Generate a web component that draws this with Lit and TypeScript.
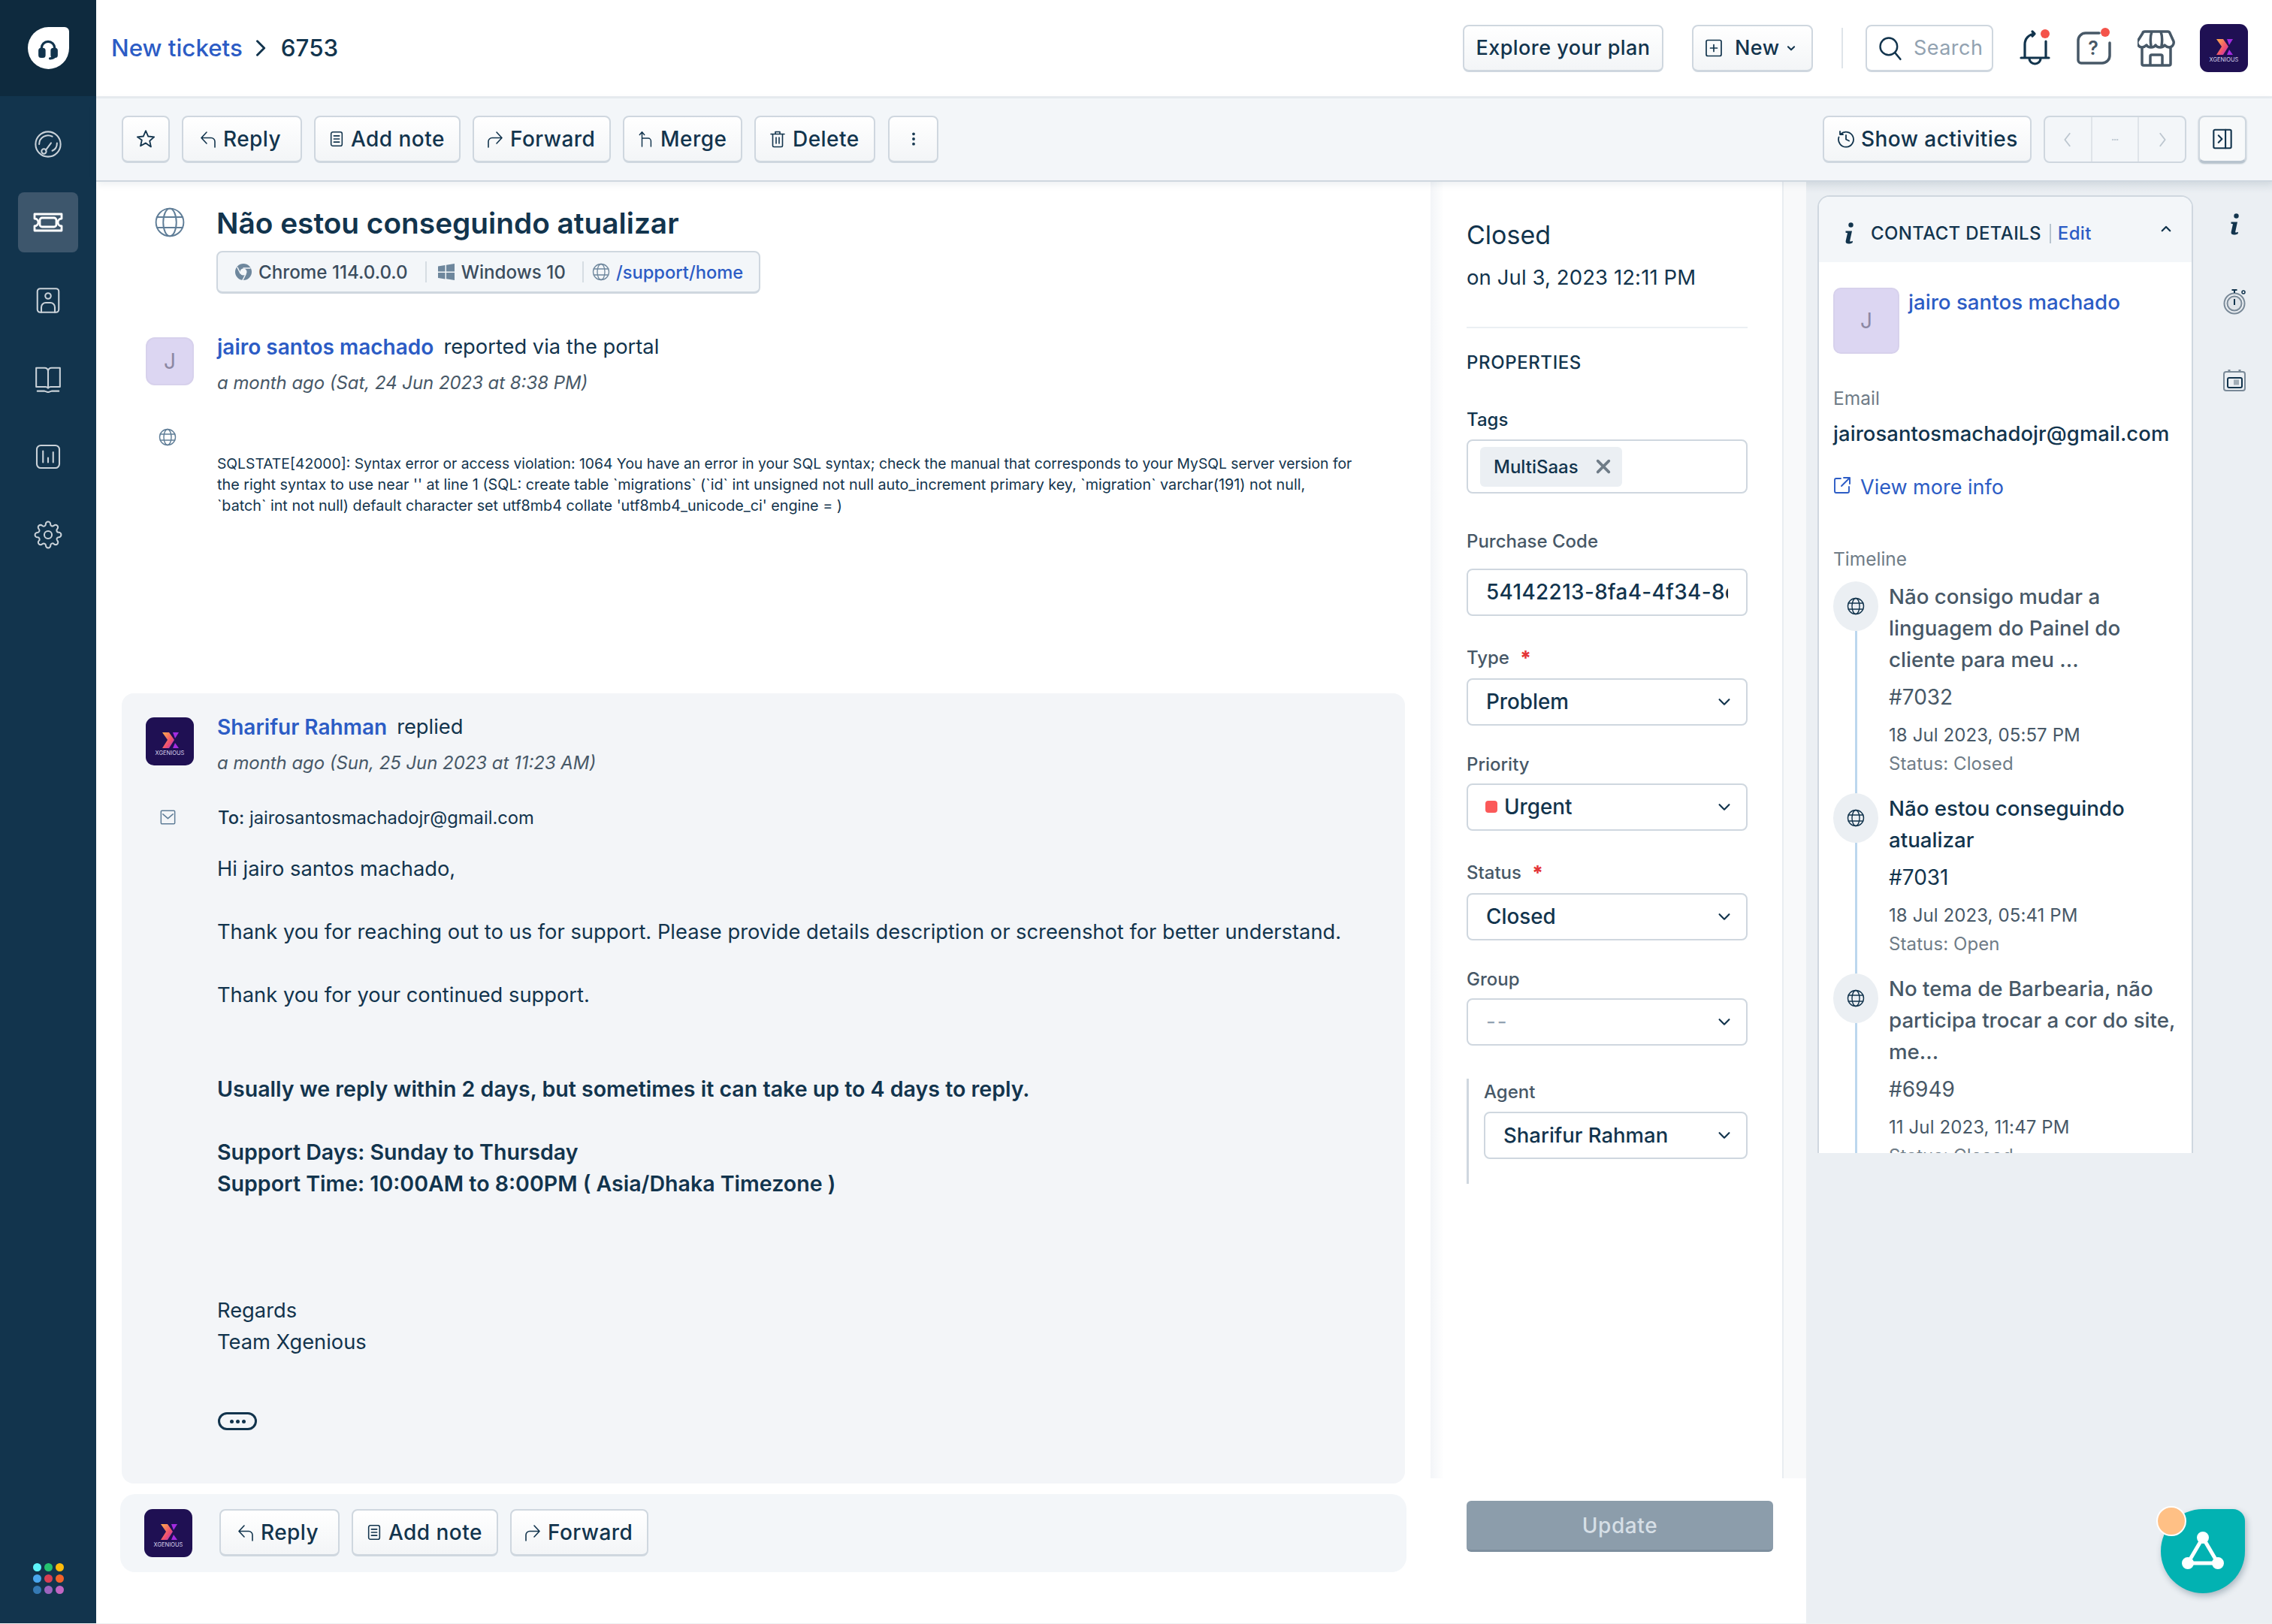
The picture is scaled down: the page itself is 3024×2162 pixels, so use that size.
import { LitElement, html, css, svg } from "lit";
import { customElement } from "lit/decorators.js";

const ic = (w: number, h: number, body: unknown, sw = 2, vb = "0 0 24 24") =>
  html`<svg width=${w} height=${h} viewBox=${vb} fill="none" stroke="currentColor" stroke-width=${sw} stroke-linecap="round" stroke-linejoin="round">${body}</svg>`;

const replyP = svg`<path d="M10 3 3 10.500 10 18M3.500 10.500H16a5 5 0 0 1 5 5V23"/>`;
const forwardP = svg`<path d="M14 3l7 7.500L14 18M20.500 10.500H8a5 5 0 0 0-5 5V23"/>`;
const noteP = svg`<rect x="4" y="2" width="16" height="20" rx="2.500"/><path d="M8 7.500h8M8 12h8M8 16.500h8"/>`;
const mergeP = svg`<path d="M6 23V2M2.500 6 6 2l3.500 4M6 11h9a4 4 0 0 1 4 4v8"/>`;
const starP = svg`<path d="m12 2 3 6.800 7.300.7-5.500 4.900 1.600 7.200L12 17l-6.400 3.600 1.600-7.200L1.700 9.500 9 8.800z"/>`;
const trashP = svg`<path d="M3 5.500h18M9 5.500V2.500h6v3M5.500 5.500V21a1.500 1.500 0 0 0 1.500 1.500h10a1.500 1.500 0 0 0 1.500-1.500V5.500M10 10v8M14 10v8"/>`;
const globeP = svg`<circle cx="12" cy="12" r="10.500"/><ellipse cx="12" cy="12" rx="5" ry="10.500"/><path d="M2.200 8h19.600M2.200 16h19.600"/>`;
const chev = svg`<path d="m5 9 7 7 7-7"/>`;
const gearP = svg`<circle cx="12" cy="12" r="3.200"/><path d="M19.400 15a1.650 1.650 0 0 0 .33 1.820l.06.06a2 2 0 0 1 0 2.830 2 2 0 0 1-2.830 0l-.06-.06a1.650 1.650 0 0 0-1.820-.33 1.650 1.650 0 0 0-1 1.510V21a2 2 0 0 1-2 2 2 2 0 0 1-2-2v-.09A1.650 1.650 0 0 0 9 19.400a1.650 1.650 0 0 0-1.820.33l-.06.06a2 2 0 0 1-2.830 0 2 2 0 0 1 0-2.830l.06-.06a1.650 1.650 0 0 0 .33-1.820 1.650 1.650 0 0 0-1.510-1H3a2 2 0 0 1-2-2 2 2 0 0 1 2-2h.09A1.650 1.650 0 0 0 4.600 9a1.650 1.650 0 0 0-.33-1.820l-.06-.06a2 2 0 0 1 0-2.830 2 2 0 0 1 2.830 0l.06.06a1.650 1.650 0 0 0 1.820.33H9a1.650 1.650 0 0 0 1-1.510V3a2 2 0 0 1 2-2 2 2 0 0 1 2 2v.09a1.650 1.650 0 0 0 1 1.510 1.650 1.650 0 0 0 1.820-.33l.06-.06a2 2 0 0 1 2.830 0 2 2 0 0 1 0 2.830l-.06.06a1.650 1.650 0 0 0-.33 1.820V9a1.650 1.650 0 0 0 1.510 1H21a2 2 0 0 1 2 2 2 2 0 0 1-2 2h-.09a1.650 1.650 0 0 0-1.510 1z"/>`;
const infoI = html`<svg width="16" height="30" viewBox="0 0 16 30"><circle cx="10.500" cy="3.500" r="3.200" fill="currentColor"/><path d="M3.500 11.500h8.500l-2.800 13c-.2 1.300 1.500 1.200 3.800.2l-.4 2.500c-3.500 1.800-9.500 2.300-9-2.200L6 14.200 3.500 13.800z" fill="currentColor"/></svg>`;

const logo = (w: number, h: number) => html`<svg class="logo" width=${w} height=${h} viewBox="0 0 64 64">
  <defs><linearGradient id="xg" x1="0" y1="0" x2="1" y2="1"><stop offset="0" stop-color="#ffb14a"/><stop offset=".6" stop-color="#f0506e"/><stop offset="1" stop-color="#a32be0"/></linearGradient></defs>
  <rect width="64" height="64" rx="11" fill="#1f1053"/>
  <path d="M22 20h9l7 10-7 11h-9l7-11z" fill="url(#xg)"/><path d="M36 20h8l-5 8zM39 34l5 7h-8z" fill="#a32be0"/>
  <text x="32" y="50" font-size="7.500" font-family="Inter, sans-serif" text-anchor="middle" fill="#d9d3ee">XGENIOUS</text></svg>`;

@customElement("app-root")
export class AppRoot extends LitElement {
  static styles = css`
    :host { display: block; width: 3024px; height: 2162px; background: #eef0f2; font-family: Inter, "Noto Sans", sans-serif; color: #12344d; overflow: hidden; }
    * { box-sizing: border-box; }
    svg { display: block; flex: none; }
    .shell { display: flex; width: 3024px; height: 2161px; }
    .side { width: 128px; flex: none; background: #12344d; display: flex; flex-direction: column; align-items: center; color: #c9d1d8; }
    .brand { width: 128px; height: 128px; background: #0e2a3e; display: flex; align-items: center; justify-content: center; flex: none; }
    .blob { width: 55px; height: 56px; background: #fff; border-radius: 50% 6px 50% 50%; display: flex; align-items: center; justify-content: center; color: #12344d; }
    .nav { margin-top: 24px; display: flex; flex-direction: column; gap: 24px; flex: 1; }
    .nav > div { width: 80px; height: 80px; display: flex; align-items: center; justify-content: center; border-radius: 8px; }
    .nav .on { background: #3d566c; color: #fff; }
    .dots { display: grid; grid-template-columns: repeat(3, 11px); gap: 4px; margin-bottom: 39px; }
    .dots i { width: 11px; height: 11px; border-radius: 50%; }
    .col { flex: 1; display: flex; flex-direction: column; min-width: 0; }
    .top { height: 131px; flex: none; background: #fff; border-bottom: 3px solid #e9edf1; display: flex; align-items: center; padding: 0 32px 0 20px; font-size: 31.300px; }
    .crumb { color: #2c5cc5; font-weight: 500; }
    .sep { margin: 0 15px 0 14px; }
    .topnum { font-weight: 500; }
    .spacer { flex: 1; }
    .btn { height: 63px; flex: none; padding: 0 22px; display: flex; align-items: center; gap: 8px; font-size: 28px; font-weight: 500; letter-spacing: .45px; color: #12344d; background: linear-gradient(#fff, #f3f5f7); border: 2px solid #cfd7df; border-bottom-width: 3px; border-radius: 8px; white-space: nowrap; }
    .btn.square { width: 64px; padding: 0; justify-content: center; }
    .btn.more { width: 67px; margin-left: 1px; }
    .plan { width: 267px; margin-right: 38px; padding: 0; justify-content: center; font-size: 27px; }
    .newb { width: 161px; padding: 0 0 0 15px; gap: 16px; font-size: 27px; }
    .newb span { margin-left: -8px; }
    .vr { width: 2px; height: 54px; background: #dfe4e9; margin: 0 30px 0 38px; }
    .search { background: #fff; width: 170px; padding: 0 14px; gap: 14px; color: #92a2b1; font-weight: 400; font-size: 27px; }
    .search svg { color: #12344d; }
    .ti { position: relative; color: #12344d; }
    .ti1 { margin-left: 27px; }
    .ti2 { margin-left: 32px; color: #475867; }
    .ti3 { margin-left: 33px; color: #475867; }
    .ti4 { margin-left: 33px; }
    .ti b { position: absolute; width: 12px; height: 12px; border-radius: 50%; background: #f4534a; }
    .ti1 b { right: 2px; top: 0; }
    .ti2 b { right: 4px; top: -3px; }
    .bar { height: 111px; flex: none; background: #f3f6f9; border-bottom: 2px solid #cfd7df; box-shadow: 0 3px 10px rgba(18,52,77,.08); display: flex; align-items: center; padding: 0 34px; gap: 16px; position: relative; z-index: 2; }
    .b-rep { width: 160px; padding: 0 0 0 21px; }
    .b-note { width: 195px; padding: 0 0 0 17px; }
    .b-for { width: 184px; padding: 0 0 0 16px; }
    .b-mer { width: 159px; padding: 0 0 0 18px; }
    .b-del { width: 161px; padding: 0 0 0 17px; }
    .b-act { width: 278px; padding: 0 0 0 17px; }
    .pager { display: flex; width: 190px; height: 63px; border: 2px solid #cfd7df; border-radius: 8px; color: #bcc6cf; }
    .pager > div { flex: 1; display: flex; align-items: center; justify-content: center; }
    .pager > div + div { border-left: 2px solid #dfe4e9; }
    .toggle { box-shadow: 0 1px 2px rgba(18,52,77,.3); background: #f7f9fa; border-bottom-color: #b8c4cf; }
    .body { flex: 1; display: flex; min-height: 0; }
    .main { width: 1776px; flex: none; background: #fff; padding: 31px 34px 0; display: flex; flex-direction: column; }
    .titlerow { display: flex; align-items: flex-start; }
    .titleic { margin: 2px 0 0 43px; color: #5f7d97; }
    .title { margin: 0 0 0 41px; font-size: 38.800px; line-height: 48px; font-weight: 600; }
    .chips { margin: 13px 0 0 126px; width: 724px; height: 57px; background: #f3f6f9; border: 2px solid #cfd7df; border-bottom-width: 3px; border-radius: 8px; display: flex; align-items: center; padding-left: 22px; font-size: 24.200px; font-weight: 500; white-space: nowrap; }
    .chips .it { display: flex; align-items: center; gap: 8px; color: #3b4d5e; }
    .chips .it svg { color: #6e879d; }
    .chips .dv { width: 2px; height: 28px; background: #d6dde3; margin: 0 14px 0 23px; }
    .chips .dv.last { margin-right: 11px; margin-left: 22px; }
    .link { color: #2c5cc5; }
    .chips .link { font-size: 23.700px; }
    .msgHead { display: flex; margin-left: 32px; }
    .first { margin-top: 58px; }
    .who { margin-left: 31px; }
    .who .l1 { font-size: 27.300px; line-height: 36px; margin-top: -5px; display: flex; gap: 13px; }
    .who .l1 a { color: #2c5cc5; font-weight: 600; font-size: 28px; }
    .who .l2 { font-size: 23.900px; line-height: 32px; margin-top: 14px; font-style: italic; color: #475867; }
    .ava { width: 64px; height: 64px; border-radius: 12px; background: #dcd6f2; color: #8c88a3; display: flex; align-items: center; justify-content: center; font-size: 28px; flex: none; border: 2px solid #d7d1ec; }
    .row { display: flex; margin-left: 49px; }
    .row > svg { color: #5f7d97; }
    .sqlrow { margin-top: 44px; }
    .sql { margin: 33px 0 0 54px; font-size: 19.300px; line-height: 28px; width: 1530px; color: #12344d; white-space: nowrap; }
    .sql span { font-size: 19.750px; }
    .card { margin-top: 236px; width: 1708px; height: 1052px; flex: none; background: #f3f5f8; border-radius: 16px; padding-top: 32px; }
    .torow { margin-top: 38px; align-items: center; height: 36px; }
    .to { margin-left: 54px; font-size: 23.750px; }
    .to b { font-weight: 500; }
    .txt { margin: 30px 0 0 127px; font-size: 27.300px; line-height: 42px; }
    .txt b { font-weight: 600; font-size: 28.550px; line-height: 1; }
    .pill { margin: 72px 0 0 128px; width: 52px; height: 24px; border: 3px solid #12344d; border-radius: 12px; display: flex; align-items: center; justify-content: center; gap: 3px; }
    .pill i { width: 5px; height: 5px; background: #12344d; border-radius: 50%; }
    .reply { margin: 14px 0 0 -2px; width: 1712px; height: 104px; flex: none; background: #f3f6f9; border-radius: 20px; display: flex; padding: 20px 0 0 32px; gap: 16px; }
    .reply .logo { margin-right: 20px; }
    .props { width: 500px; flex: none; background: #fff; display: flex; flex-direction: column; }
    .pTop { height: 1726px; flex: none; background: #f8f9fa; }
    .pIn { width: 470px; height: 100%; background: linear-gradient(90deg, #f3f5f8, #fff 18px); border-right: 2px solid #e9edf1; padding: 49px 0 0 48px; }
    .pIn h2 { margin: 0; font-size: 34px; line-height: 44px; font-weight: 400; }
    .pDate { font-size: 27.500px; line-height: 36px; margin-top: 16px; letter-spacing: .1px; }
    .hr { width: 374px; height: 2px; background: #ebeff3; margin-top: 48px; }
    .lab { font-size: 24px; height: 32px; line-height: 34px; font-weight: 500; color: #475867; white-space: nowrap; display: flex; gap: 14px; }
    .lab.dark { color: #12344d; }
    .lab em { color: #e43538; font-style: normal; font-size: 26px; font-weight: 800; }
    .ph { font-weight: 500; font-size: 24px; letter-spacing: .6px; margin-top: 29px; height: 32px; line-height: 34px; color: #12344d; }
    .ctl { width: 374px; height: 63px; border: 2px solid #cfd7df; border-radius: 8px; background: #fff; display: flex; align-items: center; justify-content: space-between; padding: 0 24px 1px; font-size: 27.800px; font-weight: 500; white-space: nowrap; overflow: hidden; }
    .g44 { margin-top: 44px; } .g47 { margin-top: 47px; } .g39 { margin-top: 39px; } .g35 { margin-top: 35px; }
    .m10 { margin-top: 10px; } .m11 { margin-top: 11px; } .m12 { margin-top: 12px; } .m21 { margin-top: 21px; }
    .tagbox { height: 72px; padding: 0 0 0 16px; justify-content: flex-start; }
    .tag { width: 189px; height: 53px; background: #ebeff3; border-radius: 6px; display: flex; align-items: center; gap: 22px; padding-left: 18px; font-size: 24px; }
    .tag svg { color: #6f7c87; }
    .code { padding-right: 24px; display: block; line-height: 59px; }
    .code span { display: block; overflow: hidden; letter-spacing: .4px; }
    .sel svg { margin-right: -6px; }
    .urg { display: flex; align-items: center; gap: 9px; margin-left: -1px; }
    .urg i { width: 16px; height: 16px; background: #fb5959; border-radius: 4px; }
    .mute { color: #92a2b1; font-weight: 400; letter-spacing: 2px; }
    .agent { margin-top: 44px; width: 374px; height: 140px; border-left: 3px solid #cfd7df; padding: 1px 0 0 20px; }
    .agent .ctl { width: 351px; font-size: 27.500px; }
    .pFoot { flex: 1; background: #fff; padding: 30px 0 0 48px; }
    .update { width: 408px; height: 68px; background: #8c9dab; border-radius: 6px; border-bottom: 3px solid #7e8f9e; color: #d6dfe6; font-size: 28px; font-weight: 500; letter-spacing: .6px; display: flex; align-items: center; justify-content: center; }
    .right { flex: 1; background: #ebeff3; display: flex; padding: 18px 0 0 15px; position: relative; }
    .right::before { content: ""; position: absolute; left: 0; right: 0; top: 0; height: 16px; background: linear-gradient(rgba(18,52,77,.05), transparent); }
    .cc { width: 500px; height: 1275px; background: #fff; border: 2px solid #cfd7df; border-bottom: 0; border-radius: 16px 16px 0 0; overflow: hidden; position: relative; }
    .ccHead { height: 87px; background: #f3f6f9; display: flex; align-items: center; padding: 10px 0 0 32px; font-size: 24px; font-weight: 500; white-space: nowrap; letter-spacing: .35px; }
    .ccHead .name { margin-left: 21px; }
    .ccHead .bar2 { width: 2px; height: 26px; background: #b8c4cf; margin: 0 9px 0 11px; }
    .ccHead .up { margin: -12px 25px 0 auto; }
    .ccBody { padding: 34px 19px 0; }
    .ctop { display: flex; gap: 12px; }
    .bigava { width: 88px; height: 88px; font-size: 28px; border-radius: 10px; }
    .ctop a { color: #2c5cc5; font-size: 27.700px; font-weight: 500; line-height: 36px; margin-top: 1px; white-space: nowrap; }
    .sm { font-size: 24.500px; line-height: 32px; color: #6f7c87; }
    .emailLab { margin-top: 43px; }
    .em { margin-top: 13px; font-size: 27.400px; line-height: 36px; font-weight: 500; white-space: nowrap; letter-spacing: .1px; }
    .vm { margin-top: 36px; display: flex; align-items: center; gap: 12px; color: #2c5cc5; font-size: 27px; line-height: 36px; }
    .vm svg { margin-top: -6px; }
    .tlab { margin-top: 61px; }
    .tl { margin-top: 14px; }
    .ti-row { display: flex; }
    .rail { width: 60px; flex: none; display: flex; flex-direction: column; align-items: center; }
    .rail .c { width: 60px; height: 66px; border-radius: 50%; background: #ebeff3; display: flex; align-items: center; justify-content: center; color: #12344d; flex: none; }
    .rail .v { width: 3px; flex: 1; background: #bcd7ee; }
    .tc { margin-left: 14px; margin-top: -1px; color: #475867; padding-bottom: 23px; }
    .tc .t { font-size: 27.700px; line-height: 42px; font-weight: 500; white-space: nowrap; }
    .tc .n { font-size: 28px; line-height: 36px; margin-top: 11px; }
    .tc .d { font-size: 24px; line-height: 32px; margin-top: 17px; letter-spacing: .1px; }
    .tc .s { font-size: 24px; line-height: 32px; margin-top: 6px; color: #6f7c87; letter-spacing: .1px; }
    .tc.cur { color: #12344d; }
    .tc.cur .d { color: #475867; }
    .rr { margin-left: 37px; width: 36px; display: flex; flex-direction: column; align-items: center; color: #12344d; padding-top: 24px; }
    .rr .stop { margin-top: 69px; }
    .rr .cal { margin-top: 72px; }
    .fab { position: absolute; left: 472px; top: 1767px; width: 112px; height: 112px; background: #02b2b2; border-radius: 50% 16px 50% 50%; box-shadow: 2px 4px 8px rgba(18,52,77,.3); display: flex; align-items: center; justify-content: center; }
    .fab i { position: absolute; left: -6px; top: -4px; width: 40px; height: 40px; border-radius: 50%; background: #ffc085; border: 2px solid #fff; }
  `;

  renderBtn(cls: string, icon: unknown, label: string) {
    return html`<div class="btn ${cls}">${icon}<span>${label}</span></div>`;
  }

  render() {
    const colors = ["#5ef4fb", "#25c36f", "#ffbb0b", "#4aa7ee", "#d93f53", "#f4632a", "#3579b3", "#9c64be", "#c266c3"];
    const tl = [
      { t: ["Não consigo mudar a", "linguagem do Painel do", "cliente para meu ..."], n: "#7032", d: "18 Jul 2023, 05:57 PM", s: "Status: Closed" },
      { t: ["Não estou conseguindo", "atualizar"], n: "#7031", d: "18 Jul 2023, 05:41 PM", s: "Status: Open", cur: true },
      { t: ["No tema de Barbearia, não", "participa trocar a cor do site,", "me..."], n: "#6949", d: "11 Jul 2023, 11:47 PM", s: "Status: Closed" },
    ];
    const selChev = ic(22, 22, chev, 2.4);
    return html`<div class="shell">
      <aside class="side">
        <div class="brand"><div class="blob">${ic(30, 34, svg`<path d="M5 19v-7a7 7 0 0 1 14 0v7M19 20c0 2-2 3-5 3"/><rect x="3" y="13" width="5" height="8" rx="1.500" fill="currentColor"/><rect x="16" y="13" width="5" height="8" rx="1.500" fill="currentColor"/>`, 2.6)}</div></div>
        <nav class="nav">
          <div>${ic(38, 40, svg`<circle cx="12" cy="12" r="10.500"/><path d="M4.500 12a7.500 7.500 0 0 1 11-6.500M19.500 11c0 3-1.500 5.500-4 6.500M14.500 11l-4.500 6"/><circle cx="8.500" cy="18" r="2"/>`, 1.3)}</div>
          <div class="on">${ic(40, 26, svg`<path d="M2 2h36v6a5 5 0 0 0 0 10v6H2v-6a5 5 0 0 0 0-10z"/><rect x="9" y="7" width="22" height="12" rx="3"/>`, 2.8, "0 0 40 26")}</div>
          <div>${ic(36, 40, svg`<rect x="2.500" y="1.500" width="19" height="21" rx="2.500"/><circle cx="12" cy="8" r="2.500"/><path d="M6 22.500V18a4 4 0 0 1 4-4h4a4 4 0 0 1 4 4v4.500"/>`, 1.4)}</div>
          <div>${ic(38, 38, svg`<path d="M2 3h7a3 3 0 0 1 3 2.500A3 3 0 0 1 15 3h7v16h-7a3 3 0 0 0-3 1 3 3 0 0 0-3-1H2zM12 5.500V20M3 22.500h6l3 1 3-1h6"/>`, 1.3)}</div>
          <div>${ic(36, 36, svg`<rect x="2" y="2" width="20" height="20" rx="3.500"/><path d="M7.500 7v10M12 13v4M16.500 8v9"/>`, 1.4)}</div>
          <div>${ic(38, 38, gearP, 1.3)}</div>
        </nav>
        <div class="dots">${colors.map((c) => html`<i style="background:${c}"></i>`)}</div>
      </aside>
      <div class="col">
        <header class="top">
          <span class="crumb">New tickets</span>
          <span class="sep">${ic(22, 22, svg`<path d="m6 2 10 10-10 10"/>`, 3.2)}</span>
          <span class="topnum">6753</span>
          <div class="spacer"></div>
          <div class="btn plan">Explore your plan</div>
          <div class="btn newb">${ic(24, 26, svg`<rect x="2" y="1.500" width="20" height="21" rx="2"/><path d="M12 7.500v9M7.500 12h9"/>`, 1.7)}New<span>${ic(14, 14, chev, 3.5)}</span></div>
          <div class="vr"></div>
          <div class="btn search">${ic(34, 34, svg`<circle cx="10.500" cy="10.500" r="8"/><path d="m16.500 16.500 5 6"/>`, 1.7)}Search</div>
          <div class="ti ti1"><svg width="50" height="50" viewBox="0 0 50 50" fill="none" stroke="currentColor" stroke-width="3.200" stroke-linecap="round" stroke-linejoin="round"><path d="M15 38V20a14 14 0 0 1 13-14M43 16v22M10 38h37M21 39a7.500 7 0 0 0 15 0M25 3l3 3-3 3"/></svg><b></b></div>
          <div class="ti ti2"><svg width="50" height="48" viewBox="0 0 50 48" fill="none" stroke="currentColor" stroke-width="3.500" stroke-linecap="round"><path d="M32 4H14A10 10 0 0 0 4 14v26a4 4 0 0 0 4 4h28a10 10 0 0 0 10-10V17"/><text x="24" y="33" font-size="25" font-family="Inter, sans-serif" font-weight="600" text-anchor="middle" fill="currentColor" stroke="none">?</text></svg><b></b></div>
          <div class="ti ti3"><svg width="50" height="50" viewBox="0 0 50 50" fill="none" stroke="currentColor" stroke-width="3.500" stroke-linecap="round" stroke-linejoin="round"><path d="M10 3h30a3 3 0 0 1 3 2l5 11c1 4-2 8-6 8-3 0-5-2-6-3-1 2-4 3-6 3s-5-1-6-3c-1 2-3 3-6 3s-5-1-6-3c-1 1-3 3-6 3-4 0-7-4-6-8L7 5c0-1 1-2 3-2zM19 3c-2 6-2 13-1 19M31 3c2 6 2 13 1 19M6 25v21a2 2 0 0 0 2 2h34a2 2 0 0 0 2-2V25M17 48V36a2 2 0 0 1 2-2h12a2 2 0 0 1 2 2v12"/></svg></div>
          <div class="ti ti4">${logo(64, 64)}</div>
        </header>
        <div class="bar">
          <div class="btn square">${ic(26, 26, starP, 1.7)}</div>
          ${this.renderBtn("b-rep", ic(24, 28, replyP, 1.6), "Reply")}
          ${this.renderBtn("b-note", ic(22, 24, noteP, 1.7), "Add note")}
          ${this.renderBtn("b-for", ic(24, 28, forwardP, 1.6), "Forward")}
          ${this.renderBtn("b-mer", ic(22, 28, mergeP, 1.6), "Merge")}
          ${this.renderBtn("b-del", ic(24, 26, trashP, 1.6), "Delete")}
          <div class="btn square more">${ic(20, 22, svg`<circle cx="12" cy="4" r="1.300"/><circle cx="12" cy="12" r="1.300"/><circle cx="12" cy="20" r="1.300"/>`, 2)}</div>
          <div class="spacer"></div>
          ${this.renderBtn("b-act", ic(24, 26, svg`<path d="M5 5.500a10 10 0 1 1-2.500 4M4 2v4h4M12 7v5.500l4 2"/>`, 1.8), "Show activities")}
          <div class="pager"><div>${ic(22, 30, svg`<path d="m15 3-7 9 7 9"/>`, 2)}</div><div>${ic(24, 12, svg`<circle cx="6" cy="12" r="1.500"/><circle cx="12" cy="12" r="1.500"/><circle cx="18" cy="12" r="1.500"/>`, 2)}</div><div>${ic(22, 30, svg`<path d="m9 3 7 9-7 9"/>`, 2)}</div></div>
          <div class="btn square toggle">${ic(28, 30, svg`<rect x="2" y="1.500" width="20" height="21" rx="1.500"/><path d="M15.500 1.500v21M7.500 8l4 4-4 4"/>`, 1.8)}</div>
        </div>
        <div class="body">
          <main class="main">
            <div class="titlerow"><span class="titleic">${ic(42, 42, globeP, 1.1)}</span><h1 class="title">Não estou conseguindo atualizar</h1></div>
            <div class="chips">
              <span class="it">${ic(24, 26, svg`<circle cx="12" cy="12" r="11" fill="currentColor" stroke="none"/><circle cx="12" cy="12" r="4.500" fill="#f3f6f9" stroke="none"/><path d="M12 7h9M8 14l-4-8M15 15l-4 8" stroke="#f3f6f9" stroke-width="1.500"/>`)}Chrome 114.0.0.0</span>
              <span class="dv"></span>
              <span class="it">${ic(24, 26, svg`<path d="M1 4.500 10.500 3v8.500H1zM12 2.800 23 1v10.500H12zM1 13h9.500v8.500L1 20zM12 13h11v10l-11-1.800z" fill="currentColor" stroke="none"/>`)}Windows 10</span>
              <span class="dv last"></span>
              <span class="it">${ic(24, 26, globeP, 1.3)}<span class="link">/support/home</span></span>
            </div>
            <div class="msgHead first">
              <div class="ava">J</div>
              <div class="who"><div class="l1"><a>jairo santos machado</a><span>reported via the portal</span></div><div class="l2">a month ago (Sat, 24 Jun 2023 at 8:38 PM)</div></div>
            </div>
            <div class="row sqlrow">${ic(24, 24, globeP, 1.4)}
              <div class="sql">SQLSTATE[42000]: Syntax error or access violation: 1064 You have an error in your SQL syntax; check the manual that corresponds to your MySQL server version for<br><span>the right syntax to use near '' at line 1 (SQL: create table \`migrations\` (\`id\` int unsigned not null auto_increment primary key, \`migration\` varchar(191) not null,</span><br><span>\`batch\` int not null) default character set utf8mb4 collate 'utf8mb4_unicode_ci' engine = )</span></div>
            </div>
            <section class="card">
              <div class="msgHead">${logo(64, 64)}
                <div class="who"><div class="l1"><a>Sharifur Rahman</a><span>replied</span></div><div class="l2">a month ago (Sun, 25 Jun 2023 at 11:23 AM)</div></div>
              </div>
              <div class="row torow">${ic(25, 20, svg`<rect x="1" y="1.500" width="22" height="21" rx="1.500"/><path d="m4 7 8 7 8-7"/>`, 1.8)}<div class="to"><b>To:</b> jairosantosmachadojr@gmail.com</div></div>
              <div class="txt">Hi jairo santos machado,<br><br>Thank you for reaching out to us for support. Please provide details description or screenshot for better understand.<br><br>Thank you for your continued support.<br><br><br><b>Usually we reply within 2 days, but sometimes it can take up to 4 days to reply.</b><br><br><b>Support Days: Sunday to Thursday</b><br><b>Support Time: 10:00AM to 8:00PM ( Asia/Dhaka Timezone )</b><br><br><br><br>Regards<br>Team Xgenious</div>
              <div class="pill"><i></i><i></i><i></i></div>
            </section>
            <div class="reply">${logo(64, 64)}
              ${this.renderBtn("b-rep", ic(24, 28, replyP, 1.6), "Reply")}
              ${this.renderBtn("b-note", ic(22, 24, noteP, 1.7), "Add note")}
              ${this.renderBtn("b-for", ic(24, 28, forwardP, 1.6), "Forward")}
            </div>
          </main>
          <section class="props">
            <div class="pTop"><div class="pIn">
              <h2>Closed</h2>
              <div class="pDate">on Jul 3, 2023 12:11 PM</div>
              <div class="hr"></div>
              <div class="ph">PROPERTIES</div>
              <div class="lab dark g44">Tags</div>
              <div class="ctl tagbox m11"><div class="tag">MultiSaas ${ic(22, 22, svg`<path d="m4 4 16 16M20 4 4 20"/>`, 4)}</div></div>
              <div class="lab g47">Purchase Code</div>
              <div class="ctl code m21"><span>54142213-8fa4-4f34-8e</span></div>
              <div class="lab g39">Type <em>*</em></div>
              <div class="ctl sel m12">Problem ${selChev}</div>
              <div class="lab g35">Priority</div>
              <div class="ctl sel m10"><span class="urg"><i></i>Urgent</span> ${selChev}</div>
              <div class="lab g39">Status <em>*</em></div>
              <div class="ctl sel m12">Closed ${selChev}</div>
              <div class="lab g35">Group</div>
              <div class="ctl sel m10"><span class="mute">--</span> ${selChev}</div>
              <div class="agent"><div class="lab">Agent</div><div class="ctl sel m11">Sharifur Rahman ${selChev}</div></div>
            </div></div>
            <div class="pFoot"><div class="update">Update</div></div>
          </section>
          <section class="right">
            <div class="cc">
              <div class="ccHead">${infoI}<span class="name">CONTACT DETAILS</span><span class="bar2"></span><span class="link">Edit</span><span class="up">${ic(18, 18, svg`<path d="m5 15 7-7 7 7"/>`, 3)}</span></div>
              <div class="ccBody">
                <div class="ctop"><div class="ava bigava">J</div><a>jairo santos machado</a></div>
                <div class="sm emailLab">Email</div>
                <div class="em">jairosantosmachadojr@gmail.com</div>
                <div class="vm">${ic(24, 24, svg`<path d="M10 3H4a2 2 0 0 0-2 2v15a2 2 0 0 0 2 2h15a2 2 0 0 0 2-2v-6M14 2h8v8M22 2 11 13"/>`, 1.9)}View more info</div>
                <div class="sm tlab">Timeline</div>
                <div class="tl">
                  ${tl.map((e) => html`<div class="ti-row">
                    <div class="rail"><div class="c">${ic(26, 24, globeP, 1.4)}</div><div class="v"></div></div>
                    <div class="tc ${e.cur ? "cur" : ""}">
                      ${e.t.map((l) => html`<div class="t">${l}</div>`)}
                      <div class="n">${e.n}</div><div class="d">${e.d}</div><div class="s">${e.s}</div>
                    </div></div>`)}
                </div>
              </div>
            </div>
            <div class="rr">
              ${infoI}
              <div class="stop"><svg width="34" height="36" viewBox="0 0 34 36" fill="none"><circle cx="17" cy="21" r="13.500" stroke="#7a8a98" stroke-width="2"/><circle cx="17" cy="21" r="9.500" fill="#dfe3e8" stroke="#7a8a98" stroke-width="2"/><path d="M17 15v8M13.500 3h7M17 3v4" stroke="#12344d" stroke-width="2"/><circle cx="29" cy="6" r="2" stroke="#12344d" stroke-width="1.500"/></svg></div>
              <div class="cal"><svg width="30" height="30" viewBox="0 0 30 30" fill="none"><rect x="1" y="4" width="28" height="25" rx="3" stroke="#7a8a98" stroke-width="2"/><path d="M8 4V1M22 4V1" stroke="#7a8a98" stroke-width="3"/><rect x="6" y="12" width="19" height="13" rx="2" stroke="#12344d" stroke-width="2"/><rect x="14" y="14.500" width="7" height="7" fill="#a0acb6"/></svg></div>
            </div>
            <div class="fab"><i></i><svg width="56" height="52" viewBox="0 0 56 52" fill="none" stroke="#fff" stroke-width="5"><path d="M28 8 8 42h40z"/><circle cx="28" cy="8" r="5.500" fill="#fff"/><circle cx="8" cy="42" r="5.500" fill="#fff"/><circle cx="48" cy="42" r="5.500" fill="#fff"/></svg></div>
          </section>
        </div>
      </div>
    </div>`;
  }
}
